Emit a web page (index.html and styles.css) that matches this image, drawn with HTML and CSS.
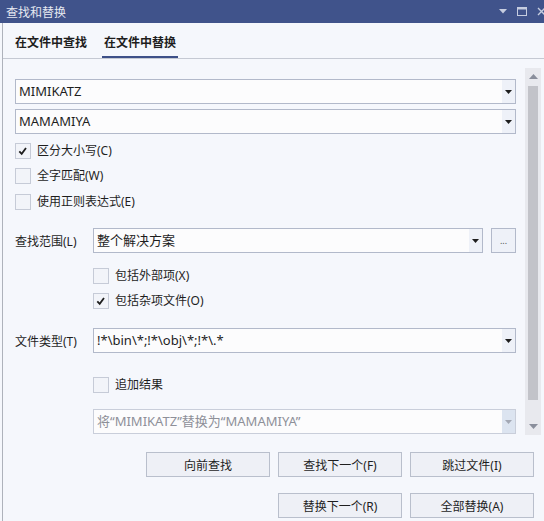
FILE: index.html
```html
<!DOCTYPE html>
<html lang="zh-CN">
<head>
  <meta charset="UTF-8">
  <title>查找和替换</title>
  <link rel="stylesheet" href="styles.css">
</head>
<body>
  <div class="titlebar">
    <span class="title">查找和替换</span>
    <div class="win-controls">
      <svg width="8" height="5" viewBox="0 0 8 5"><polygon points="0,0 8,0 4,4.5" fill="#c6cde0"/></svg>
      <svg width="10" height="9" viewBox="0 0 10 9"><rect x="0.5" y="0.5" width="9" height="8" fill="none" stroke="#c6cde0"/><rect x="0" y="0" width="10" height="2.5" fill="#c6cde0"/></svg>
      <svg width="9" height="9" viewBox="0 0 9 9"><path d="M1 1 L8 8 M8 1 L1 8" stroke="#c6cde0" stroke-width="1.4"/></svg>
    </div>
  </div>

  <div class="window">
    <nav class="tabs">
      <a class="tab">在文件中查找</a>
      <a class="tab active">在文件中替换</a>
    </nav>

    <div class="scroll-area">
      <form class="form">
        <div class="combo">
          <span class="combo-text">MIMIKATZ</span>
          <span class="combo-drop"><svg width="7" height="4" viewBox="0 0 7 4"><polygon points="0,0 7,0 3.5,4"/></svg></span>
        </div>
        <div class="combo gap-5">
          <span class="combo-text">MAMAMIYA</span>
          <span class="combo-drop"><svg width="7" height="4" viewBox="0 0 7 4"><polygon points="0,0 7,0 3.5,4"/></svg></span>
        </div>

        <label class="check mt-9">
          <span class="box checked"><svg width="16" height="16" viewBox="0 0 16 16"><path d="M4.3 8.3 L6.7 10.8 L11 5" fill="none" stroke="#1e1e1e" stroke-width="1.8"/></svg></span>
          区分大小写(C)
        </label>
        <label class="check mt-9">
          <span class="box"></span>
          全字匹配(W)
        </label>
        <label class="check mt-10">
          <span class="box"></span>
          使用正则表达式(E)
        </label>

        <div class="field-row mt-18">
          <span class="field-label">查找范围(L)</span>
          <div class="combo grow">
            <span class="combo-text">整个解决方案</span>
            <span class="combo-drop"><svg width="7" height="4" viewBox="0 0 7 4"><polygon points="0,0 7,0 3.5,4"/></svg></span>
          </div>
          <button type="button" class="browse">...</button>
        </div>

        <label class="check indent mt-15">
          <span class="box"></span>
          包括外部项(X)
        </label>
        <label class="check indent mt-9">
          <span class="box checked"><svg width="16" height="16" viewBox="0 0 16 16"><path d="M4.3 8.3 L6.7 10.8 L11 5" fill="none" stroke="#1e1e1e" stroke-width="1.8"/></svg></span>
          包括杂项文件(O)
        </label>

        <div class="field-row mt-19">
          <span class="field-label">文件类型(T)</span>
          <div class="combo grow">
            <span class="combo-text">!*\bin\*;!*\obj\*;!*\.*</span>
            <span class="combo-drop"><svg width="7" height="4" viewBox="0 0 7 4"><polygon points="0,0 7,0 3.5,4"/></svg></span>
          </div>
        </div>

        <label class="check indent mt-24">
          <span class="box"></span>
          追加结果
        </label>

        <div class="combo disabled indent mt-16">
          <span class="combo-text">将“MIMIKATZ”替换为“MAMAMIYA”</span>
          <span class="combo-drop"><svg width="7" height="4" viewBox="0 0 7 4"><polygon points="0,0 7,0 3.5,4"/></svg></span>
        </div>
      </form>

      <div class="scrollbar">
        <div class="sb-btn"><svg width="9" height="5" viewBox="0 0 9 5"><polygon points="0,5 9,5 4.5,0"/></svg></div>
        <div class="sb-track"><div class="sb-thumb"></div></div>
        <div class="sb-btn"><svg width="9" height="5" viewBox="0 0 9 5"><polygon points="0,0 9,0 4.5,5"/></svg></div>
      </div>
    </div>

    <div class="actions">
      <div class="btn-row">
        <button type="button" class="btn">向前查找</button>
        <button type="button" class="btn">查找下一个(F)</button>
        <button type="button" class="btn">跳过文件(I)</button>
      </div>
      <div class="btn-row">
        <button type="button" class="btn">替换下一个(R)</button>
        <button type="button" class="btn">全部替换(A)</button>
      </div>
    </div>
  </div>
</body>
</html>
```

FILE: styles.css
```css
:root {
  --title-bg: #40538b;
  --accent: #3e5088;
  --background: #f5f7fc;
  --foreground: #1e1e1e;
  --field-bg: #fcfcfd;
  --field-border: #b2b9ca;
  --drop-bg: #eef1f8;
  --box-border: #c6cbd7;
  --box-bg: #f2f4f9;
  --muted: #8e9099;
}

* {
  margin: 0;
  padding: 0;
  box-sizing: border-box;
}

body {
  font-family: "Noto Sans", "Noto Sans CJK SC", sans-serif;
  font-size: 12px;
  color: var(--foreground);
  background-color: var(--background);
  overflow: hidden;
}

/* title bar */
.titlebar {
  height: 23px;
  background-color: var(--title-bg);
  display: flex;
  align-items: center;
  justify-content: space-between;
  padding-left: 6px;
}

.title {
  color: #e6e9f1;
  font-size: 12px;
}

.win-controls {
  display: flex;
  align-items: center;
  gap: 10px;
  margin-right: -2px;
}

/* window body */
.window {
  margin-left: 2px;
  border-left: 1px solid #aeb2bb;
  height: calc(100vh - 23px);
}

.tabs {
  display: flex;
  gap: 13px;
  padding-left: 10px;
  border-bottom: 1px solid #c5c9d3;
}

.tab {
  padding: 12px 2px 5px;
  line-height: 16px;
  font-weight: bold;
  border-bottom: 2px solid transparent;
}

.tab.active {
  border-bottom-color: var(--accent);
}

.scroll-area {
  display: flex;
  height: 367px;
  margin-top: 9px;
}

.form {
  flex: 1;
  display: flex;
  flex-direction: column;
  padding: 11px 9px 0 12px;
}

/* combo boxes */
.combo {
  display: flex;
  height: 25px;
  border: 1px solid var(--field-border);
  background-color: var(--field-bg);
}

.combo.grow {
  flex: 1;
}

.combo-text {
  flex: 1;
  padding-left: 3px;
  font-size: 13px;
  line-height: 23px;
  white-space: nowrap;
  overflow: hidden;
}

.combo-drop {
  width: 13px;
  display: flex;
  align-items: center;
  justify-content: center;
  background-color: var(--drop-bg);
}

.combo-drop svg {
  fill: #1e1e1e;
}

.combo.disabled {
  border-color: #c9ceda;
}

.combo.disabled .combo-text {
  color: var(--muted);
}

.combo.disabled .combo-drop {
  background-color: #dce4f0;
}

.combo.disabled .combo-drop svg {
  fill: #a3a8b4;
}

/* checkboxes */
.check {
  display: flex;
  align-items: center;
  gap: 6px;
  height: 16px;
  line-height: 16px;
}

.box {
  width: 16px;
  height: 16px;
  border: 1px solid var(--box-border);
  background-color: var(--box-bg);
  display: flex;
}

.box svg {
  margin: -1px;
}

.indent {
  margin-left: 78px;
}

/* labelled rows */
.field-row {
  display: flex;
  align-items: center;
  height: 25px;
}

.field-label {
  width: 78px;
  flex-shrink: 0;
}

.browse {
  width: 25px;
  height: 25px;
  margin-left: 8px;
  border: 1px solid var(--field-border);
  background-color: var(--drop-bg);
  font-family: inherit;
  font-size: 9px;
  color: #555;
  line-height: 20px;
}

.gap-5 { margin-top: 5px; }
.mt-9 { margin-top: 9px; }
.mt-10 { margin-top: 10px; }
.mt-15 { margin-top: 15px; }
.mt-16 { margin-top: 16px; }
.mt-18 { margin-top: 18px; }
.mt-19 { margin-top: 19px; }
.mt-24 { margin-top: 24px; }

/* scrollbar */
.scrollbar {
  width: 16px;
  margin-right: 3px;
  display: flex;
  flex-direction: column;
  background-color: #e8e9ee;
}

.sb-btn {
  height: 17px;
  display: flex;
  align-items: center;
  justify-content: center;
}

.sb-btn svg {
  fill: #8a8f9c;
}

.sb-track {
  flex: 1;
  display: flex;
  padding: 1px 3px 18px;
}

.sb-thumb {
  flex: 1;
  background-color: #c2c3c9;
}

/* bottom buttons */
.actions {
  display: flex;
  flex-direction: column;
  gap: 16px;
  margin-top: 17px;
  padding-right: 10px;
}

.btn-row {
  display: flex;
  justify-content: flex-end;
  gap: 8px;
}

.btn {
  width: 124px;
  height: 25px;
  border: 1px solid #b9bfcc;
  background-color: #eef0f6;
  font-family: inherit;
  font-size: 12px;
  color: var(--foreground);
}
```
